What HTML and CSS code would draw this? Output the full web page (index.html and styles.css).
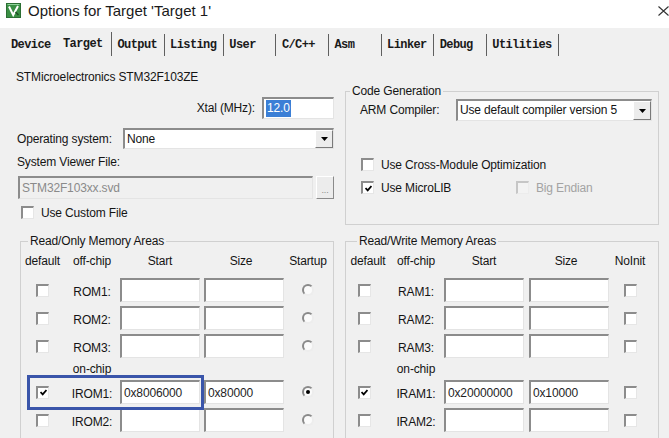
FILE: index.html
```html
<!DOCTYPE html>
<html lang="en">
<head>
<meta charset="utf-8">
<title>Options for Target 'Target 1'</title>
<link rel="stylesheet" href="styles.css">
</head>
<body>
<header class="titlebar">
  <svg class="app-icon" viewBox="0 0 15 15" aria-hidden="true">
    <rect x="0.5" y="0.5" width="14" height="14" fill="#3a8f44" stroke="#2b6e33"/>
    <path d="M1.5 1.5 H13.5" stroke="#8fd39a" stroke-width="1"/>
    <path d="M3 3.5 L7.2 12 L12 3" fill="none" stroke="#ffffff" stroke-width="2"/>
    <path d="M9.5 9 L12.5 12" stroke="#1d4d23" stroke-width="1.5"/>
  </svg>
  <span class="title">Options for Target 'Target 1'</span>
  <svg class="close" viewBox="0 0 11 10" aria-hidden="true">
    <path d="M0.5 0.5 L10.5 9.5 M10.5 0.5 L0.5 9.5" stroke="#333" stroke-width="1.1" fill="none"/>
  </svg>
</header>

<nav class="tabs">
  <span class="tab first">Device</span>
  <span class="tab active">Target</span>
  <span class="tab">Output</span>
  <span class="tab">Listing</span>
  <span class="tab">User</span>
  <span class="tab">C/C++</span>
  <span class="tab">Asm</span>
  <span class="tab">Linker</span>
  <span class="tab">Debug</span>
  <span class="tab">Utilities</span>
</nav>

<main class="panel">
  <section class="setup">
    <div class="device">STMicroelectronics STM32F103ZE</div>
    <div class="xtal-row">
      <span>Xtal (MHz):</span>
      <div class="edit xtal"><span class="selected">12.0</span></div>
    </div>
    <div class="os-row">
      <span class="os-label">Operating system:</span>
      <div class="combo os">
        <span>None</span>
        <span class="drop"><svg viewBox="0 0 7 4" aria-hidden="true"><path d="M0 0 H7 L3.5 4 Z" fill="#000"/></svg></span>
      </div>
    </div>
    <div class="svf-label">System Viewer File:</div>
    <div class="svf-row">
      <div class="edit disabled svf">STM32F103xx.svd</div>
      <span class="browse">...</span>
    </div>
    <div class="check-row custom"><span class="cb"></span><span>Use Custom File</span></div>
  </section>

  <fieldset class="group codegen">
    <legend>Code Generation</legend>
    <div class="compiler-row">
      <span class="compiler-label">ARM Compiler:</span>
      <div class="combo compiler">
        <span>Use default compiler version 5</span>
        <span class="drop"><svg viewBox="0 0 7 4" aria-hidden="true"><path d="M0 0 H7 L3.5 4 Z" fill="#000"/></svg></span>
      </div>
    </div>
    <div class="check-row xmo"><span class="cb"></span><span>Use Cross-Module Optimization</span></div>
    <div class="lib-row">
      <div class="check-row"><span class="cb"><svg viewBox="0 0 7 7" aria-hidden="true"><path d="M0.5 3 L2.7 5.4 L6.5 1" fill="none" stroke="#000" stroke-width="1.8"/></svg></span><span>Use MicroLIB</span></div>
      <div class="check-row dim"><span class="cb off"></span><span>Big Endian</span></div>
    </div>
  </fieldset>

  <fieldset class="group mem rom">
    <legend>Read/Only Memory Areas</legend>
    <div class="mem-grid">
      <span class="h">default</span><span class="h">off-chip</span><span class="h hs">Start</span><span class="h hz">Size</span><span class="h">Startup</span>

      <span class="cb"></span><span class="lbl">ROM1:</span><span class="edit field"></span><span class="edit field"></span><span class="radio"></span>
      <span class="cb"></span><span class="lbl">ROM2:</span><span class="edit field"></span><span class="edit field"></span><span class="radio"></span>
      <span class="cb"></span><span class="lbl">ROM3:</span><span class="edit field"></span><span class="edit field"></span><span class="radio"></span>

      <span></span><span class="lbl onchip">on-chip</span><span></span><span></span><span></span>

      <span class="cb"><svg viewBox="0 0 7 7" aria-hidden="true"><path d="M0.5 3 L2.7 5.4 L6.5 1" fill="none" stroke="#000" stroke-width="1.8"/></svg></span><span class="lbl">IROM1:</span><span class="edit field">0x8006000</span><span class="edit field">0x80000</span><span class="radio on"><span class="dot"></span></span>
      <span class="cb"></span><span class="lbl">IROM2:</span><span class="edit field"></span><span class="edit field"></span><span class="radio"></span>
    </div>
  </fieldset>

  <fieldset class="group mem ram">
    <legend>Read/Write Memory Areas</legend>
    <div class="mem-grid">
      <span class="h">default</span><span class="h">off-chip</span><span class="h hs">Start</span><span class="h hz">Size</span><span class="h">NoInit</span>

      <span class="cb"></span><span class="lbl">RAM1:</span><span class="edit field"></span><span class="edit field"></span><span class="cb"></span>
      <span class="cb"></span><span class="lbl">RAM2:</span><span class="edit field"></span><span class="edit field"></span><span class="cb"></span>
      <span class="cb"></span><span class="lbl">RAM3:</span><span class="edit field"></span><span class="edit field"></span><span class="cb"></span>

      <span></span><span class="lbl onchip">on-chip</span><span></span><span></span><span></span>

      <span class="cb"><svg viewBox="0 0 7 7" aria-hidden="true"><path d="M0.5 3 L2.7 5.4 L6.5 1" fill="none" stroke="#000" stroke-width="1.8"/></svg></span><span class="lbl">IRAM1:</span><span class="edit field">0x20000000</span><span class="edit field">0x10000</span><span class="cb"></span>
      <span class="cb"></span><span class="lbl">IRAM2:</span><span class="edit field"></span><span class="edit field"></span><span class="cb"></span>
    </div>
  </fieldset>
</main>

<div class="annotation"></div>
</body>
</html>
```

FILE: styles.css
```css
html, body {
  margin: 0;
}

body {
  position: relative;
  width: 669px;
  height: 438px;
  overflow: hidden;
  background: #f0f0f0;
  font-family: "Liberation Sans", Arial, sans-serif;
  font-size: 12px;
  letter-spacing: -0.15px;
  color: #141414;
}

/* ---------- title bar ---------- */
.titlebar {
  height: 28px;
  box-sizing: border-box;
  padding: 0 0 6px 6px;
  background: #ffffff;
  display: flex;
  align-items: center;
}

.app-icon {
  width: 15px;
  height: 15px;
  margin-right: 7px;
  margin-top: -1px;
  flex: none;
}

.title {
  font-size: 15px;
  line-height: 18px;
  letter-spacing: 0;
  color: #1a1a1a;
}

.close {
  margin-left: auto;
  width: 11px;
  height: 10px;
  flex: none;
}

/* ---------- tabs ---------- */
.tabs {
  display: flex;
  height: 22px;
  margin-top: 6px;
  padding-left: 5.5px;
  font: bold 12px/14px "Liberation Mono", "DejaVu Sans Mono", monospace;
  letter-spacing: -0.6px;
  color: #1a1a1a;
}

.tab {
  display: flex;
  align-items: center;
  min-width: 39.6px;
  padding: 0 6.5px 0 5.5px;
  border-right: 1px solid #5f5f5f;
  white-space: pre;
}

.tab.first {
  border-right: 0;
}

.tab.active {
  margin-top: -2px;
  padding: 0 8.4px 0 5.9px;
}

/* ---------- panel ---------- */
.panel {
  display: grid;
  grid-template-columns: 318px 314px;
  column-gap: 11px;
  row-gap: 9px;
  padding: 12px 0 0 16px;
}

.setup {
  display: flex;
  flex-direction: column;
}

.device {
  height: 18px;
  line-height: 18px;
}

.xtal-row {
  margin-top: 11px;
  height: 22px;
  display: flex;
  justify-content: flex-end;
  align-items: center;
  gap: 7px;
}

.edit {
  box-sizing: border-box;
  background: #ffffff;
  border-style: solid;
  border-width: 2px 1px 1px 2px;
  border-color: #8c8c8c #e4e4e4 #e4e4e4 #8c8c8c;
  display: flex;
  align-items: center;
  padding-left: 2px;
  color: #1e1e1e;
}

.xtal {
  width: 72px;
  height: 22px;
}

.selected {
  background: #3b7fd6;
  color: #ffffff;
  padding: 0 1px;
  line-height: 17px;
}

.os-row {
  margin-top: 9px;
  height: 21px;
  display: flex;
  align-items: center;
}

.os-label {
  width: 106px;
  padding-left: 1px;
}

.combo {
  box-sizing: border-box;
  height: 21px;
  background: #ffffff;
  border-style: solid;
  border-width: 2px 1px 1px 2px;
  border-color: #8c8c8c #e4e4e4 #e4e4e4 #8c8c8c;
  display: flex;
  align-items: stretch;
  padding-left: 2px;
  line-height: 18px;
}

.os {
  width: 211px;
}

.drop {
  margin-left: auto;
  width: 18px;
  box-sizing: border-box;
  background: #ececec;
  border: 1px solid;
  border-color: #ffffff #7a7a7a #7a7a7a #ffffff;
  display: flex;
  align-items: center;
  justify-content: center;
}

.drop svg {
  width: 7px;
  height: 4px;
}

.svf-label {
  margin-top: 6px;
  height: 15px;
  line-height: 15px;
  padding-left: 1px;
}

.svf-row {
  margin-top: 6px;
  height: 23px;
  display: flex;
  gap: 3px;
}

.svf {
  width: 295px;
  height: 23px;
  margin-left: 2px;
}

.edit.disabled {
  background: #f0f0f0;
  color: #8a8a8a;
}

.browse {
  width: 18px;
  height: 23px;
  box-sizing: border-box;
  border: 1px solid;
  border-color: #ffffff #8a8a8a #8a8a8a #ffffff;
  background: #ececec;
  color: #8a8a8a;
  font-size: 9px;
  line-height: 9px;
  display: flex;
  align-items: flex-end;
  justify-content: center;
  padding-bottom: 3px;
}

/* ---------- check boxes & radios ---------- */
.check-row {
  display: flex;
  align-items: center;
  gap: 7px;
  height: 15px;
}

.cb {
  box-sizing: border-box;
  width: 13px;
  height: 13px;
  flex: none;
  background: #ffffff;
  border-style: solid;
  border-width: 2px 1px 1px 2px;
  border-color: #8c8c8c #e6e6e6 #e6e6e6 #8c8c8c;
  display: inline-flex;
  align-items: center;
  justify-content: center;
}

.cb svg {
  width: 7px;
  height: 7px;
}

.cb.off {
  background: #f3f3f3;
  border-color: #c6c6c6 #ececec #ececec #c6c6c6;
}

.dim {
  color: #a3a3a3;
}

.radio {
  box-sizing: border-box;
  width: 12px;
  height: 12px;
  border-radius: 50%;
  border: 2px solid;
  border-color: #8a8a8a #ededed #ededed #8a8a8a;
  background: #fbfbfb;
  display: flex;
  align-items: center;
  justify-content: center;
}

.dot {
  width: 4px;
  height: 4px;
  border-radius: 50%;
  background: #000000;
}

.custom {
  margin-top: 6px;
  padding-left: 5px;
}

/* ---------- group boxes ---------- */
.group {
  margin: 0;
  padding: 0;
  min-width: 0;
  border: 1px solid #d0d0d0;
}

.group legend {
  padding: 0 2px;
  line-height: 14px;
}

.codegen {
  margin-top: 16px;
  height: 141px;
  box-sizing: border-box;
}

.codegen legend {
  margin-left: 4px;
}

.compiler-row {
  margin-top: 1px;
  height: 22px;
  padding: 0 6px 0 14px;
  display: flex;
  align-items: center;
}

.compiler-label {
  width: 96px;
}

.compiler {
  width: 196px;
  height: 22px;
}

.xmo {
  margin-top: 36px;
  padding-left: 15px;
}

.lib-row {
  margin-top: 8px;
  padding-left: 15px;
  display: grid;
  grid-template-columns: 155px auto;
}

/* ---------- memory tables ---------- */
.mem {
  padding-bottom: 30px;
}

.rom {
  margin-left: 4px;
}

.rom legend {
  margin-left: 7px;
}

.ram legend {
  margin-left: 11px;
}

.mem-grid {
  margin-top: 6px;
  display: grid;
  grid-template-rows: 20px 24px 24px 24px 14px 24px 24px;
  row-gap: 4px;
  align-items: center;
  justify-items: center;
}

.rom .mem-grid {
  grid-template-columns: 43px 56px 84px 80px 48px;
}

.ram .mem-grid {
  grid-template-columns: 44px 52px 87px 80px 42px;
}

.h {
  align-self: start;
  line-height: 14px;
}

.hs,
.hz {
  justify-self: start;
  width: 80px;
  text-align: center;
}

.hz {
  box-sizing: border-box;
  padding-right: 6px;
}

.ram .hs {
  margin-left: 2px;
}

.lbl {
  line-height: 14px;
  padding-top: 3px;
}

.lbl.onchip {
  padding-top: 0;
}

.field {
  justify-self: start;
  width: 80px;
  height: 24px;
}

.ram .field:nth-child(5n+3) {
  margin-left: 2px;
}

.ram .mem-grid > .cb:nth-child(5n+1) {
  margin-right: 8px;
}

/* ---------- annotation ---------- */
.annotation {
  position: absolute;
  left: 27px;
  top: 375px;
  width: 177px;
  height: 35px;
  box-sizing: border-box;
  border: 3px solid #3a55aa;
}
```
